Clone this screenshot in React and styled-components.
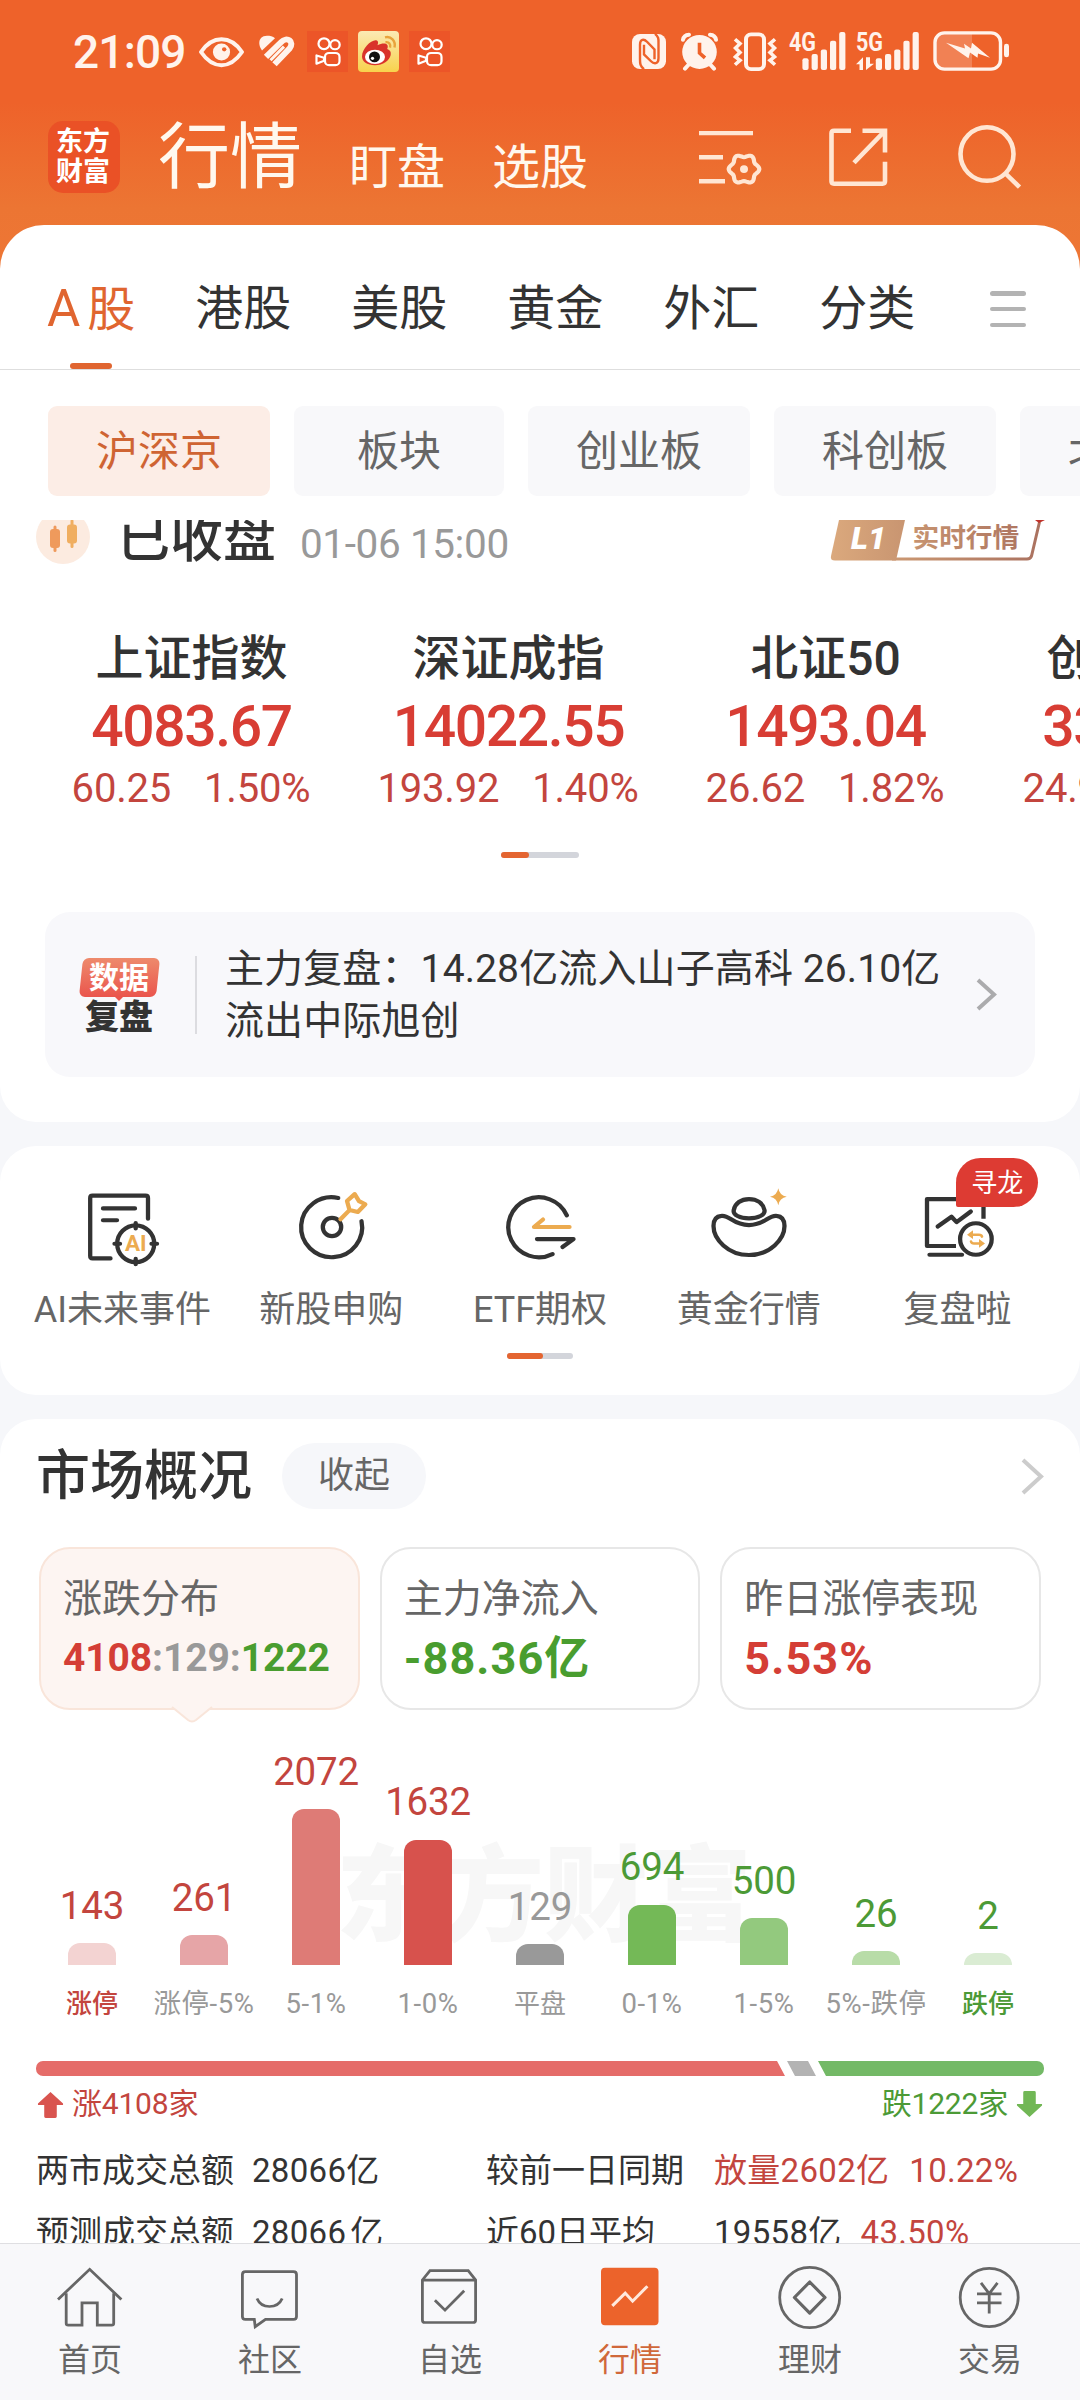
import React from 'react';
import styled, { createGlobalStyle } from 'styled-components';

const GlobalStyle = createGlobalStyle`
    * {
        box-sizing: border-box;
    }
    body {
        margin: 0;
        font-family: Roboto, "Noto Sans CJK SC", sans-serif;
        color: #333;
    }
    svg {
        display: block;
        flex: none;
    }
`;

const RED = '#c3453e';
const GREEN = '#4c9a36';

const Page = styled.div`
    width: 1080px;
    height: 2400px;
    display: flex;
    flex-direction: column;
    overflow: hidden;
    background: #f6f7fa;
`;
const Top = styled.div`
    flex: none;
    background: linear-gradient(#ee622a 0, #ee622a 102px, #ec7533 208px, #ee7635 272px);
`;
const StatusBar = styled.div`
    height: 103px;
    padding: 0 71px 0 74px;
    display: flex;
    align-items: center;
    justify-content: space-between;
`;
const StatusGroup = styled.div`
    display: flex;
    align-items: center;
    gap: 10px;
`;
const Clock = styled.div`
    width: 115px;
    margin-left: -1px;
    font-size: 46px;
    font-weight: 500;
    line-height: 50px;
    letter-spacing: -0.8px;
    color: #fff3ec;
`;
const TitleBar = styled.div`
    height: 122px;
    padding: 0 58px 0 48px;
    display: flex;
    align-items: flex-start;
`;
const Logo = styled.div`
    width: 72px;
    height: 72px;
    margin-top: 18px;
    padding: 6px 8px;
    border-radius: 15px;
    background: #ea5126;
    color: #fff;
    font-size: 27px;
    font-weight: 700;
    line-height: 30px;
`;
const Title = styled.div`
    margin: 17px 0 0 38px;
    font-size: 72px;
    line-height: 76px;
    color: #fff8ee;
`;
const SubTitle = styled.div`
    margin: 35px 0 0 47px;
    font-size: 48px;
    line-height: 60px;
    color: #fff8ee;
`;
const TitleIcons = styled.div`
    margin: 17px 0 0 auto;
    display: flex;
    gap: 61px;
`;
const Sheet = styled.div`
    height: 295px;
    background: #fff;
    border-radius: 44px 44px 0 0;
`;
const Tabs = styled.div`
    height: 145px;
    padding: 0 54px 0 47px;
    display: flex;
    gap: 60px;
    border-bottom: 1px solid #dedede;
`;
const Tab = styled.div`
    height: 144px;
    padding-top: 54px;
    display: flex;
    flex-direction: column;
    align-items: center;
    justify-content: space-between;
    font-size: 48px;
    line-height: 60px;
    white-space: nowrap;
    color: ${props => props.$active ? '#e06530' : '#333'};
`;
const TabLetter = styled.span`
    font-size: 51px;
    margin-right: 7px;
`;
const TabLine = styled.div`
    width: 42px;
    height: 6px;
    border-radius: 3px;
    background: #e06530;
`;
const MenuIcon = styled.div`
    margin: 66px 0 0 auto;
    height: 36px;
    width: 36px;
    display: flex;
    flex-direction: column;
    justify-content: space-between;
`;
const MenuBar = styled.div`
    height: 4.5px;
    border-radius: 2.5px;
    background: #b3b3b3;
`;
const Chips = styled.div`
    padding: 36px 0 0 48px;
    display: flex;
    gap: 24px;
    overflow: hidden;
`;
const Chip = styled.div`
    flex: none;
    min-width: 210px;
    height: 90px;
    padding: 0 48px;
    border-radius: 9px;
    text-align: center;
    font-size: 42px;
    line-height: 91px;
    background: ${props => props.$active ? '#fcede6' : '#f8f8fa'};
    color: ${props => props.$active ? '#cf6433' : '#666'};
`;
const Scroller = styled.div`
    flex: 1;
    min-height: 0;
    overflow: hidden;
`;
/* list is scrolled a few pixels under the chips */
const ScrollBody = styled.div`
    margin-top: -10px;
    display: flex;
    flex-direction: column;
    gap: 24px;
`;
const Panel = styled.div`
    height: ${props => props.$height}px;
    padding-top: ${props => props.$top || 0}px;
    border-radius: ${props => props.$first ? '0 0 36px 36px' : '36px'};
    background: #fff;
`;
const MarketState = styled.div`
    height: 54px;
    padding: 0 34px 0 36px;
    display: flex;
    align-items: center;
`;
const StateText = styled.div`
    margin-left: 27px;
    padding-top: 3px;
    font-size: 53px;
    font-weight: 500;
    line-height: 54px;
`;
const StateTime = styled.div`
    margin-left: 24px;
    padding-top: 14px;
    font-size: 40.5px;
    line-height: 44px;
    letter-spacing: -0.4px;
    color: #999;
`;
const LevelBadge = styled.svg`
    margin-left: auto;
`;
const Indices = styled.div`
    margin-top: 65px;
    padding-left: 33px;
    display: flex;
    overflow: hidden;
`;
const IndexItem = styled.div`
    flex: none;
    width: 317px;
    text-align: center;
`;
const IndexName = styled.div`
    font-size: 48px;
    font-weight: 500;
    line-height: 60px;
`;
const IndexValue = styled.div`
    font-size: 57px;
    font-weight: 500;
    line-height: 76px;
    letter-spacing: -1.4px;
    color: #d83d34;
`;
const IndexChange = styled.div`
    display: flex;
    justify-content: center;
    gap: 33px;
    margin-left: -1px;
    font-size: 40px;
    line-height: 48px;
    letter-spacing: -0.2px;
    color: ${RED};
`;
const Pager = styled.div`
    width: ${props => props.$width}px;
    height: 6px;
    margin: ${props => props.$top}px auto 0;
    border-radius: 3px;
    background: #d3d5db;
`;
const PagerOn = styled.div`
    width: ${props => props.$width}px;
    height: 6px;
    border-radius: 3px;
    background: #e46531;
`;
const Review = styled.div`
    height: 165px;
    margin: 54px 45px 0;
    padding: 0 38px 0 34px;
    display: flex;
    align-items: center;
    border-radius: 25px;
    background: #f8f8fb;
`;
const ReviewTag = styled.div`
    width: 80px;
    padding-top: 3px;
    display: flex;
    flex-direction: column;
    align-items: center;
`;
const ReviewTagTop = styled.div`
    position: relative;
    isolation: isolate;
    width: 77px;
    height: 39px;
    color: #fff;
    text-align: center;
    font-size: 30px;
    font-weight: 700;
    line-height: 40px;
    &::before {
        content: '';
        position: absolute;
        z-index: -1;
        inset: 0;
        border-radius: 6px;
        transform: skewX(-6deg);
        background: linear-gradient(#ee8a6c, #ea554d);
    }
    &::after {
        content: '';
        position: absolute;
        left: 33px;
        bottom: -4px;
        border: solid transparent;
        border-width: 0 5px;
        border-top: 5px solid #ea554d;
    }
`;
const ReviewTagBottom = styled.div`
    margin-top: 2px;
    font-size: 34px;
    font-weight: 900;
    line-height: 36px;
`;
const ReviewLine = styled.div`
    width: 2px;
    height: 78px;
    margin: 0 28px 0 36px;
    background: #dcdce0;
`;
const ReviewText = styled.div`
    flex: 1;
    padding-top: 1px;
    font-size: 39px;
    line-height: 52.5px;
    letter-spacing: 0.12px;
    white-space: nowrap;
`;
const Tools = styled.div`
    padding: 0 18px;
    display: flex;
`;
const Tool = styled.div`
    position: relative;
    width: 209px;
    display: flex;
    flex-direction: column;
    align-items: center;
`;
const ToolName = styled.div`
    margin-top: 15px;
    font-size: 36px;
    line-height: 50px;
    white-space: nowrap;
    color: #666;
`;
const ToolBadge = styled.div`
    position: absolute;
    left: 103px;
    top: -25px;
    width: 82px;
    height: 49px;
    border-radius: 25px 25px 25px 2px;
    background: #dd3b33;
    color: #fff;
    text-align: center;
    font-size: 26px;
    line-height: 50px;
`;
const SectionHead = styled.div`
    height: 66px;
    padding: 0 36px;
    display: flex;
    align-items: center;
`;
const SectionTitle = styled.div`
    margin-top: 2px;
    font-size: 54px;
    font-weight: 500;
    line-height: 60px;
`;
const FoldButton = styled.div`
    width: 144px;
    height: 66px;
    margin: 0 auto 0 30px;
    border-radius: 33px;
    background: #f6f7fa;
    color: #666;
    text-align: center;
    font-size: 36px;
    line-height: 67px;
`;
const Cards = styled.div`
    padding: 0 39px;
    margin-top: 38px;
    display: flex;
    gap: 20px;
`;
const Card = styled.div`
    position: relative;
    flex: 1;
    height: 163px;
    padding: 22px 0 0 22px;
    border: 2px solid ${props => props.$active ? '#f9e5da' : '#e7e7e7'};
    border-radius: 31px;
    background: ${props => props.$active ? '#fdf5f2' : '#fff'};
    white-space: nowrap;
`;
const CardArrow = styled.svg`
    position: absolute;
    left: 129px;
    bottom: -16px;
`;
const CardName = styled.div`
    font-size: 39px;
    line-height: 56px;
    color: #666;
`;
const CardValue = styled.div`
    font-size: ${props => props.$small ? 39 : 45}px;
    font-weight: 700;
    line-height: 63px;
    letter-spacing: ${props => props.$small ? -0.1 : 1.1}px;
    color: ${props => props.$color};
`;
const Part = styled.span`
    color: ${props => props.$color};
`;
const Chart = styled.div`
    position: relative;
    height: 255px;
    padding: 0 36px;
    display: flex;
    align-items: flex-end;
`;
const Watermark = styled.div`
    position: absolute;
    left: 336px;
    top: 128px;
    font-size: 104px;
    font-weight: 900;
    line-height: 120px;
    color: #f7f7f7;
`;
const ChartCol = styled.div`
    position: relative;
    width: 112px;
    display: flex;
    flex-direction: column;
    align-items: center;
`;
const BarValue = styled.div`
    margin-bottom: 12.5px;
    font-size: 38.5px;
    line-height: 50px;
    letter-spacing: -0.2px;
    color: ${props => props.$color};
`;
const Bar = styled.div`
    width: 48px;
    border-radius: 12px 12px 0 0;
    background: ${props => props.$color};
`;
const ChartLabels = styled.div`
    margin-top: 19px;
    padding: 0 36px;
    display: flex;
`;
const ChartLabel = styled.div`
    width: 112px;
    text-align: center;
    white-space: nowrap;
    font-size: ${props => props.$small ? 26 : 27.5}px;
    font-weight: ${props => props.$edge ? 500 : 400};
    line-height: 40px;
    letter-spacing: ${props => props.$small ? 0 : 0.6}px;
    color: ${props => props.$color};
`;
const Ratio = styled.div`
    margin: 37px 36px 0;
    height: 15px;
    display: flex;
    gap: 2px;
    border-radius: 7px;
    overflow: hidden;
`;
const RatioPart = styled.div`
    flex: ${props => props.$width ? `0 0 ${props.$width}px` : 1};
    background: ${props => props.$color};
    clip-path: ${props => props.$shape};
`;
const RatioText = styled.div`
    height: 50px;
    margin-top: 3px;
    padding: 0 37px;
    display: flex;
    align-items: center;
    justify-content: space-between;
    font-size: 30px;
    line-height: 50px;
    letter-spacing: -0.2px;
`;
const RatioSide = styled.div`
    display: flex;
    align-items: center;
    gap: 8px;
    color: ${props => props.$color};
`;
const Stats = styled.div`
    margin-top: 11px;
    padding-left: 36px;
    display: grid;
    grid-template-columns: 216px 234px 228px auto;
    grid-auto-rows: 62.4px;
    line-height: 62px;
    white-space: nowrap;
    font-size: 33px;
`;
const Stat = styled.div`
    display: flex;
    gap: ${props => props.$gap || 0}px;
    letter-spacing: ${props => props.$number ? 0.3 : 0}px;
    color: ${props => props.$color || '#333'};
`;
const Nav = styled.div`
    flex: none;
    height: 157px;
    padding-top: 19px;
    display: flex;
    border-top: 1px solid #dfdfe2;
    background: #f8f8fa;
`;
const NavItem = styled.div`
    width: 180px;
    display: flex;
    flex-direction: column;
    align-items: center;
    font-size: 32px;
    line-height: 44px;
    color: ${props => props.$active ? '#d0683a' : '#666'};
`;
const NavName = styled.div`
    margin-top: 5px;
`;

const ICON = '#fff3ec';

const EyeIcon = () => (
    <svg width="50" height="43" viewBox="0 0 50 44" preserveAspectRatio="none">
        <path d="M3 22.500C9 13.500 15 9.500 23.500 9.500S38 13.500 44 22.500C38 31.500 32 36 23.500 36S9 31.500 3 22.500Z" fill="none" stroke={ICON} strokeWidth="4" strokeLinejoin="round" />
        <circle cx="23.500" cy="22.500" r="8.600" fill={ICON} />
        <circle cx="26.200" cy="19.800" r="2.200" fill="#ee622a" />
    </svg>
);

const HeartIcon = () => (
    <svg width="39" height="43" viewBox="0 0 39 44" preserveAspectRatio="none">
        <path d="M4 21C-1 14 1 6 9 6c3 0 6 .5 8 2.500Z" fill={ICON} />
        <path d="M8 27.500L23 12.500C29 6 37 12 31.500 19L16.500 35" fill="none" stroke={ICON} strokeWidth="6" />
        <path d="M12.500 31L26 17" fill="none" stroke={ICON} strokeWidth="3" />
    </svg>
);

const KwaiIcon = () => (
    <svg width="41" height="43" viewBox="0 0 41 44" preserveAspectRatio="none">
        <rect y="1" width="41" height="42" fill="#ec5528" />
        <g fill="none" stroke="#fff" strokeWidth="2.200" strokeLinejoin="round">
            <circle cx="17" cy="14" r="5.500" />
            <circle cx="28" cy="15" r="4.700" />
            <rect x="18" y="23.500" width="14.500" height="12.500" rx="4" />
            <path d="M9.500 26V34.500L17 31.500V28.500Z" />
        </g>
    </svg>
);

const WeiboIcon = () => (
    <svg width="41" height="43" viewBox="0 0 41 44" preserveAspectRatio="none">
        <defs>
            <linearGradient id="wb" x1="0" y1="0" x2="0" y2="1">
                <stop offset="0" stopColor="#fbeab4" />
                <stop offset="1" stopColor="#f8d24d" />
            </linearGradient>
        </defs>
        <rect y="1" width="41" height="42" rx="4" fill="url(#wb)" />
        <path d="M4 27C4 19 13 10 18 10.500c3 .5 2 4 1.500 5 4-2 9-2.500 10 0 .6 1.500 0 3-.3 4 3 1 4 3 3.500 6C31.500 31.500 25 36 17 36 9 36 4 32 4 27Z" fill="#d9332b" />
        <ellipse cx="17" cy="27.500" rx="10" ry="7.300" fill="#fff" />
        <circle cx="16.500" cy="27.500" r="5.500" fill="#111" />
        <circle cx="14.500" cy="29" r="1.600" fill="#fff" />
        <path d="M27 7.500C33 6 38 11 36.500 18M27.500 12.500C31 12 33 14.500 32 18" fill="none" stroke="#e8a33c" strokeWidth="2.400" />
    </svg>
);

const NfcIcon = () => (
    <svg width="39" height="43" viewBox="0 0 39 44" preserveAspectRatio="none">
        <rect x="0" y="4" width="34" height="36" rx="8" fill={ICON} />
        <g fill="none" stroke="#ee622a" strokeWidth="2.400">
            <path d="M12 40C8 37 8 34 8 30V15C8 9 12 9 15 12L22.500 20V30" />
            <path d="M23 4C27 7 26.500 10 26.500 14V29C26.500 35 22 35 19 32L12 25V15" />
        </g>
    </svg>
);

const AlarmIcon = () => (
    <svg width="42" height="43" viewBox="0 0 42 44" preserveAspectRatio="none">
        <circle cx="18.500" cy="22.500" r="17.300" fill={ICON} />
        <g fill="none" stroke={ICON} strokeWidth="4" strokeLinecap="round">
            <path d="M2 10C2.500 7 5 5 8 4.800M35 10C34.500 7 32 5 29 4.800M8 35L4 39.500M29 35L33 39.500" />
        </g>
        <path d="M18.500 13V23.500L24 28.500" fill="none" stroke="#ee622a" strokeWidth="3.600" />
    </svg>
);

const VibrateIcon = () => (
    <svg width="46" height="43" viewBox="0 0 46 44" preserveAspectRatio="none" fill="none" stroke={ICON} strokeWidth="4">
        <rect x="13" y="4.500" width="18" height="35.500" rx="5" />
        <path d="M2 9.500L7 14 2.500 18.500 7 23 2.500 27.500 7 31 2 35.500" strokeWidth="3.600" />
        <path d="M42 9.500L37 14 41.500 18.500 37 23 41.500 27.500 37 31 42 35.500" strokeWidth="3.600" />
    </svg>
);

const SignalIcon = ({ label, left, width, arrows }) => (
    <svg width={width} height="43" viewBox={`0 0 ${width} 44`} preserveAspectRatio="none" overflow="visible" fill={ICON}>
        <text x="0" y="21.500" fontSize="26" fontWeight="700" textLength="27" lengthAdjust="spacingAndGlyphs">{label}</text>
        {[29, 24.500, 20, 11, 2].map((top, i) => (
            <rect key={top} x={left + i * 9.200} y={top} width="6.200" height={41 - top} rx="2" />
        ))}
        {arrows && <path d="M0 35L7 28V41H3.500V35ZM10 28V41L18 34.500H14V28Z" />}
    </svg>
);

const BatteryIcon = () => (
    <svg width="76" height="43" viewBox="0 0 76 44" preserveAspectRatio="none">
        <path d="M11 4H39V39H11Q3 38 3 30V12Q3 4 11 4Z" fill={ICON} opacity=".22" />
        <rect x="2" y="3" width="65.500" height="37" rx="9.500" fill="none" stroke={ICON} strokeWidth="3.400" />
        <rect x="71" y="14" width="5" height="14" rx="2.500" fill={ICON} />
        <path d="M13 13L32 19 31 14 38 19 39 13 57 28.500 45 24 44.500 28.500 37 23 35.500 29Z" fill={ICON} />
    </svg>
);

// six lobed cog outline
const cogPath = () => {
    const pts = [];
    for (let i = 0; i < 72; i++) {
        const a = i * Math.PI / 36;
        const r = 13.800 + 1.500 * Math.cos(6 * a);
        pts.push(`${(47 + r * Math.cos(a)).toFixed(1)} ${(50.500 + r * Math.sin(a)).toFixed(1)}`);
    }
    return `M${pts.join('L')}Z`;
};

const SettingsIcon = () => (
    <svg width="67" height="70" viewBox="0 0 67 72" preserveAspectRatio="none" fill="none" stroke="#ffe6d3" strokeWidth="4.600">
        <path d="M2 13.500H56M2 38.300H26M2 63H28" />
        <path d={cogPath()} strokeWidth="4.200" />
        <circle cx="47" cy="50.500" r="4" fill="#ffe6d3" stroke="none" />
    </svg>
);

const ShareIcon = () => (
    <svg width="68" height="70" viewBox="0 0 68 72" preserveAspectRatio="none" fill="none" stroke="#ffe6d3" strokeWidth="4.600">
        <path d="M26 11H9Q6.500 11 6.500 13.500V63Q6.500 65.500 9 65.500H57.500Q60 65.500 60 63V43" />
        <path d="M37.500 11H60V33.500M60 11L29 44" />
    </svg>
);

const SearchIcon = () => (
    <svg width="68" height="70" viewBox="0 0 68 72" preserveAspectRatio="none" fill="none" stroke="#ffe6d3" strokeWidth="4.600">
        <ellipse cx="33" cy="35" rx="26.500" ry="27.500" />
        <path d="M51 54.500L65.500 69" />
    </svg>
);

const CandleIcon = () => (
    <svg width="54" height="54" viewBox="0 0 54 54">
        <circle cx="27" cy="27" r="27" fill="#fcebe0" />
        <rect x="14" y="19" width="10" height="19" rx="3" fill="#ef9a5c" />
        <path d="M19 17V40.500" stroke="#ef9a5c" strokeWidth="3" strokeLinecap="round" />
        <rect x="31" y="14.500" width="10" height="19" rx="3" fill="#f0ae60" />
        <path d="M36 11V36.500" stroke="#f0ae60" strokeWidth="3" strokeLinecap="round" />
    </svg>
);

const Level = () => (
    <LevelBadge width="216" height="54" viewBox="0 0 216 54">
        <defs>
            <linearGradient id="lv" gradientUnits="userSpaceOnUse" x1="0" y1="0" x2="216" y2="0">
                <stop offset="0" stopColor="#dba97d" />
                <stop offset=".4" stopColor="#c6926f" />
                <stop offset="1" stopColor="#a9705f" />
            </linearGradient>
        </defs>
        <path d="M9 10H75L66 50.500H5Q0 50.500 1 46Z" fill="url(#lv)" />
        <path d="M62 49H197Q200.500 49 201.500 46L209.500 12" fill="none" stroke="url(#lv)" strokeWidth="3" />
        <path d="M205 10H215L209 13Z" fill="#c0322b" />
        <text x="21" y="39" fontSize="32" fontWeight="900" fontStyle="italic" fill="#fff" textLength="35" lengthAdjust="spacingAndGlyphs">L1</text>
        <text x="82.500" y="36.500" fontSize="26.700" fontWeight="700" fill="url(#lv)">实时行情</text>
    </LevelBadge>
);

const Chevron = ({ width, height, color }) => (
    <svg width={width + 6} height={height + 6} viewBox={`-3 -3 ${width + 6} ${height + 6}`} fill="none" stroke={color} strokeWidth="4">
        <path d={`M0 0L${width} ${height / 2}L0 ${height}`} />
    </svg>
);

const DARK = '#333';
const GOLD = '#ecab50';

const toolIcon = children => (
    <svg width="90" height="87" viewBox="0 0 90 90" preserveAspectRatio="none" fill="none" stroke={DARK} strokeWidth="4.300" strokeLinecap="round" strokeLinejoin="round">
        {children}
    </svg>
);

const tools = [
    {
        name: 'AI未来事件',
        icon: toolIcon(<>
            <path d="M71 37V15.500Q71 13 68.500 13H15.500Q13.200 13 13.200 15.500V75.500Q13.200 78 15.500 78H33.500" />
            <path d="M26 26.300H58M26 38.500H40" />
            <ellipse cx="58.700" cy="62.800" rx="18.500" ry="19" />
            <path d="M58.700 41.500V47M58.700 78.500V84M37.500 62.800H43M74.500 62.800H80" />
            <text x="48" y="70.800" fontSize="22.500" fontWeight="700" fill={GOLD} stroke="none">AI</text>
        </>),
    },
    {
        name: '新股申购',
        icon: toolIcon(<>
            <path d="M52.200 15.500A30.500 31 0 1 0 75.500 39.500" />
            <ellipse cx="46" cy="45.500" rx="9.200" ry="9.500" />
            <path d="M54.500 37.500L63.500 28M68.700 11.500L61 18.700 63.500 28 71.800 30 79.300 22 73 18.700Z" stroke={GOLD} />
        </>),
    },
    {
        name: 'ETF期权',
        icon: toolIcon(<>
            <path d="M71.800 33.500A30.500 31 0 1 0 57.500 73.500" />
            <path d="M74.500 45.500H39L48 37.800" stroke={GOLD} />
            <path d="M42 58H78.500L67.500 66.200" />
        </>),
    },
    {
        name: '黄金行情',
        icon: toolIcon(<>
            <path d="M17.500 34C26 33 29 43.500 45 43.500S64 33 72.500 34C78.500 34.500 80.500 39 80.500 44.500 80.500 58 66 74.500 45 74.500S9.500 58 9.500 44.500C9.500 39 11.500 34.500 17.500 34Z" />
            <path d="M29.800 28C31 21 37 16.600 45 16.600S59 21 60.500 28C61.500 33 54 36.600 45 36.600S28.500 33 29.800 28Z" />
            <path d="M74.300 5.500Q75.500 13 82.800 14.200 75.500 15.500 74.300 23 73 15.500 66 14.200 73 13 74.300 5.500Z" fill={GOLD} stroke="none" />
        </>),
    },
    {
        name: '复盘啦',
        badge: '寻龙',
        icon: toolIcon(<>
            <path d="M70.500 37V16.600H14V65.200H43" strokeLinecap="butt" />
            <path d="M16.500 74.200H49" />
            <path d="M24.700 45L38.500 34.900 43.600 40.500 57.800 29.500" />
            <ellipse cx="62.900" cy="57.900" rx="15.800" ry="16.300" fill="#fff" />
            <path d="M58 53.500H66Q68.500 53.500 69 55.500M68 62.500H61Q58.500 62.500 58 60.500" stroke={GOLD} strokeWidth="2.600" />
            <path d="M54 53.500L60 49V58ZM72 62.500L66 58V67Z" fill={GOLD} stroke="none" />
        </>),
    },
];

const navIcon = children => (
    <svg width="72" height="70" viewBox="0 0 72 72" preserveAspectRatio="none" fill="none" stroke="#666" strokeWidth="2.800">
        {children}
    </svg>
);

const navItems = [
    {
        name: '首页',
        icon: navIcon(<>
            <path d="M4 37.500L35.700 6.500 67.400 37.500" />
            <path d="M12.200 31V62Q12.200 64 14.200 64H28V41H43.300V64H57.700Q59.700 64 59.700 62V31" />
        </>),
    },
    {
        name: '社区',
        icon: navIcon(<>
            <path d="M11.400 8.800H59.500Q62.500 8.800 62.500 11.800V55Q62.500 58 59.500 58H31.500L21.200 65.500 20.300 58H11.400Q8.400 58 8.400 55V11.800Q8.400 8.800 11.400 8.800Z" />
            <path d="M23 36.500C27.500 47.500 43.500 47.500 48.200 36.500" />
        </>),
    },
    {
        name: '自选',
        icon: navIcon(<>
            <path d="M8.400 17.500L16 7.800H54.200L61.600 17.500V58.500Q61.600 61.200 59 61.200H11Q8.400 61.200 8.400 58.500ZM8.400 17.500H61.600" />
            <path d="M20.900 38.300L31 48.500 50.200 28.600" />
        </>),
    },
    {
        name: '行情',
        active: true,
        icon: navIcon(<>
            <rect x="7" y="5" width="57.500" height="59" rx="4" fill="#ec632b" stroke="none" />
            <path d="M18.300 44.100L31.200 31 38.600 39.300 53.400 23.800" stroke="#ffe9dd" strokeWidth="3" />
        </>),
    },
    {
        name: '理财',
        icon: navIcon(<>
            <ellipse cx="35.700" cy="35.500" rx="30" ry="31" />
            <path d="M35.700 19.500L51 35.500 35.700 51.500 20.400 35.500Z" strokeLinejoin="round" strokeWidth="3.200" />
        </>),
    },
    {
        name: '交易',
        icon: navIcon(<>
            <ellipse cx="35.200" cy="35.500" rx="29" ry="30" />
            <path d="M27 20.500L35.200 31.500 43.500 20.500M23 31.700H47.500M23 41H47.500M35.200 31V52" />
        </>),
    },
];

const tabs = ['港股', '美股', '黄金', '外汇', '分类'];
const chips = ['沪深京', '板块', '创业板', '科创板', '北交所'];

const indices = [
    { name: '上证指数', value: '4083.67', change: '60.25', percent: '1.50%' },
    { name: '深证成指', value: '14022.55', change: '193.92', percent: '1.40%' },
    { name: '北证50', value: '1493.04', change: '26.62', percent: '1.82%' },
    { name: '创业板指', value: '3319.29', change: '24.99', percent: '0.76%' },
];

const spread = [
    { label: '涨停', value: 143, color: '#f3d3d2', text: RED, edge: true, small: true },
    { label: '涨停-5%', value: 261, color: '#e6a5a7', text: RED },
    { label: '5-1%', value: 2072, color: '#de7b76', text: RED },
    { label: '1-0%', value: 1632, color: '#d7524d', text: RED },
    { label: '平盘', value: 129, color: '#999', text: '#999', small: true },
    { label: '0-1%', value: 694, color: '#74b957', text: GREEN },
    { label: '1-5%', value: 500, color: '#93c97e', text: GREEN },
    { label: '5%-跌停', value: 26, color: '#b8dca8', text: GREEN },
    { label: '跌停', value: 2, color: '#daecd3', text: GREEN, edge: true, small: true },
];

const barHeight = value => 11.800 + value * 0.0695;

const App = () => (
    <Page lang="zh-CN">
        <GlobalStyle />
        <Top>
            <StatusBar>
                <StatusGroup>
                    <Clock>21:09</Clock>
                    <EyeIcon />
                    <HeartIcon />
                    <KwaiIcon />
                    <WeiboIcon />
                    <KwaiIcon />
                </StatusGroup>
                <StatusGroup>
                    <NfcIcon />
                    <AlarmIcon />
                    <VibrateIcon />
                    <SignalIcon label="4G" left={13.400} width={57} />
                    <SignalIcon label="5G" left={19.800} width={67} arrows />
                    <BatteryIcon />
                </StatusGroup>
            </StatusBar>
            <TitleBar>
                <Logo>东方财富</Logo>
                <Title>行情</Title>
                <SubTitle>盯盘</SubTitle>
                <SubTitle>选股</SubTitle>
                <TitleIcons>
                    <SettingsIcon />
                    <ShareIcon />
                    <SearchIcon />
                </TitleIcons>
            </TitleBar>
            <Sheet>
                <Tabs>
                    <Tab $active>
                        <div><TabLetter>A</TabLetter>股</div>
                        <TabLine />
                    </Tab>
                    {tabs.map(tab => <Tab key={tab}>{tab}</Tab>)}
                    <MenuIcon>
                        <MenuBar />
                        <MenuBar />
                        <MenuBar />
                    </MenuIcon>
                </Tabs>
                <Chips>
                    {chips.map((chip, i) => <Chip key={chip} $active={i === 0}>{chip}</Chip>)}
                </Chips>
            </Sheet>
        </Top>

        <Scroller>
            <ScrollBody>
                <Panel $height={612} $first>
                    <MarketState>
                        <CandleIcon />
                        <StateText>已收盘</StateText>
                        <StateTime>01-06 15:00</StateTime>
                        <Level />
                    </MarketState>
                    <Indices>
                        {indices.map(item => (
                            <IndexItem key={item.name}>
                                <IndexName>{item.name}</IndexName>
                                <IndexValue>{item.value}</IndexValue>
                                <IndexChange>
                                    <span>{item.change}</span>
                                    <span>{item.percent}</span>
                                </IndexChange>
                            </IndexItem>
                        ))}
                    </Indices>
                    <Pager $width={78} $top={39}><PagerOn $width={28} /></Pager>
                    <Review>
                        <ReviewTag>
                            <ReviewTagTop>数据</ReviewTagTop>
                            <ReviewTagBottom>复盘</ReviewTagBottom>
                        </ReviewTag>
                        <ReviewLine />
                        <ReviewText>
                            主力复盘：14.28亿流入山子高科 26.10亿<br />
                            流出中际旭创
                        </ReviewText>
                        <Chevron width={16} height={29} color="#ababad" />
                    </Review>
                </Panel>

                <Panel $height={249} $top={37}>
                    <Tools>
                        {tools.map(tool => (
                            <Tool key={tool.name}>
                                {tool.icon}
                                <ToolName>{tool.name}</ToolName>
                                {tool.badge && <ToolBadge>{tool.badge}</ToolBadge>}
                            </Tool>
                        ))}
                    </Tools>
                    <Pager $width={66} $top={18}><PagerOn $width={36} /></Pager>
                </Panel>

                <Panel $height={900} $top={24}>
                    <SectionHead>
                        <SectionTitle>市场概况</SectionTitle>
                        <FoldButton>收起</FoldButton>
                        <Chevron width={18} height={33} color="#ccc" />
                    </SectionHead>
                    <Cards>
                        <Card $active>
                            <CardName>涨跌分布</CardName>
                            <CardValue $small $color="#999">
                                <Part $color="#d43e36">4108</Part>:129:<Part $color="#499d2f">1222</Part>
                            </CardValue>
                            <CardArrow width="44" height="18" viewBox="0 0 44 18">
                                <path d="M2 0L18 13.500Q22 16.500 26 13.500L42 0Z" fill="#fdf5f2" />
                                <path d="M2 1L18 14Q22 17 26 14L42 1" fill="none" stroke="#f9e5da" strokeWidth="2" />
                            </CardArrow>
                        </Card>
                        <Card>
                            <CardName>主力净流入</CardName>
                            <CardValue $color="#499d2f">-88.36亿</CardValue>
                        </Card>
                        <Card>
                            <CardName>昨日涨停表现</CardName>
                            <CardValue $color="#d43e36">5.53%</CardValue>
                        </Card>
                    </Cards>
                    <Chart>
                        <Watermark>东方财富</Watermark>
                        {spread.map(item => (
                            <ChartCol key={item.label}>
                                <BarValue $color={item.text}>{item.value}</BarValue>
                                <Bar $color={item.color} style={{ height: barHeight(item.value) }} />
                            </ChartCol>
                        ))}
                    </Chart>
                    <ChartLabels>
                        {spread.map(item => (
                            <ChartLabel
                                key={item.label}
                                $edge={item.edge}
                                $small={item.small}
                                $color={item.edge ? item.text : '#999'}
                            >
                                {item.label}
                            </ChartLabel>
                        ))}
                    </ChartLabels>
                    <Ratio>
                        <RatioPart $width={749} $color="#e56c69" $shape="polygon(0 0, calc(100% - 8px) 0, 100% 100%, 0 100%)" />
                        <RatioPart $width={29} $color="#b3b3b3" $shape="polygon(0 0, 21px 0, 100% 100%, 8px 100%)" />
                        <RatioPart $color="#73b966" $shape="polygon(0 0, 100% 0, 100% 100%, 8px 100%)" />
                    </Ratio>
                    <RatioText>
                        <RatioSide $color={RED}>
                            <svg width="27" height="27" viewBox="0 0 27 28" fill="#d9544f">
                                <path d="M13.500 1L26.500 13V14.500H20V26.500Q20 28 18.500 28H8.500Q7 28 7 26.500V14.500H.5V13Z" />
                            </svg>
                            <span>涨4108家</span>
                        </RatioSide>
                        <RatioSide $color={GREEN}>
                            <span>跌1222家</span>
                            <svg width="27" height="27" viewBox="0 0 27 28" fill="#71b755">
                                <path d="M13.500 27L26.500 15V13.500H20V1.500Q20 0 18.500 0H8.500Q7 0 7 1.500V13.500H.5V15Z" />
                            </svg>
                        </RatioSide>
                    </RatioText>
                    <Stats>
                        <Stat>两市成交总额</Stat>
                        <Stat $number>28066亿</Stat>
                        <Stat>较前一日同期</Stat>
                        <Stat $number $gap={20} $color={RED}>
                            <span>放量2602亿</span>
                            <span>10.22%</span>
                        </Stat>
                        <Stat>预测成交总额</Stat>
                        <Stat $number $gap={4}>
                            <span>28066</span>
                            <span>亿</span>
                        </Stat>
                        <Stat>近60日平均</Stat>
                        <Stat $number $gap={19}>
                            <span>19558亿</span>
                            <Part $color={RED}>43.50%</Part>
                        </Stat>
                    </Stats>
                </Panel>
            </ScrollBody>
        </Scroller>

        <Nav>
            {navItems.map(item => (
                <NavItem key={item.name} $active={item.active}>
                    {item.icon}
                    <NavName>{item.name}</NavName>
                </NavItem>
            ))}
        </Nav>
    </Page>
);

export default App;
